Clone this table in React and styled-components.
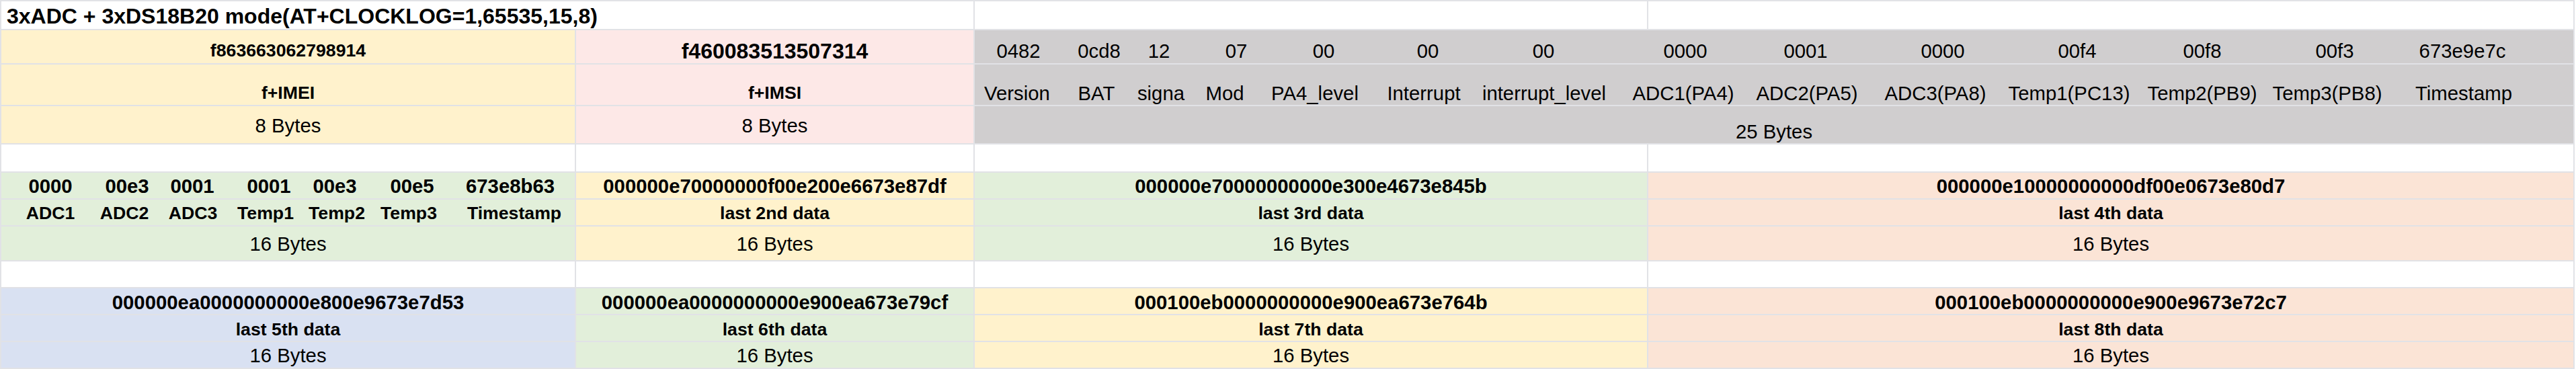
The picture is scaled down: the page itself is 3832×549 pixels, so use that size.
import React from "react";
import styled, { createGlobalStyle } from "styled-components";

const GlobalStyle = createGlobalStyle`
  body {
    margin: 0;
    background: #fff;
  }
`;

const FILL = {
  white: "#ffffff",
  yellow: "#fff2cc",
  pink: "#fde8e7",
  gray: "#d0cecf",
  green: "#e2efda",
  orange: "#fbe4d6",
  blue: "#d9e1f2",
};

// sheet grid, the background shows through the 2px gaps as gridlines
const Sheet = styled.div`
  display: grid;
  grid-template-columns: 853px 591px 1000px 1376px;
  grid-template-rows: 41px 49px 60px 55px 40px 38px 38px 50px 38px 38px 38px 38px;
  gap: 2px;
  padding: 2px;
  width: max-content;
  background: #e1e2e6;
  font-family: "Liberation Sans", Arial, sans-serif;
  color: #000;
`;

const Cell = styled.div`
  grid-column: span ${(p) => p.$span || 1};
  display: flex;
  align-items: flex-end;
  justify-content: ${(p) => (p.$left ? "flex-start" : "center")};
  min-width: 0;
  padding: 0 0 ${(p) => p.$pb ?? 4}px ${(p) => p.$pl || 0}px;
  background: ${(p) => FILL[p.$bg || "white"]};
  font-size: ${(p) => p.$size || 29.33}px;
  font-weight: ${(p) => (p.$bold ? 700 : 400)};
  line-height: 1;
  white-space: nowrap;
`;

const Fields = styled.div`
  display: grid;
  grid-template-columns: ${(p) => p.$cols.map((w) => w + "px").join(" ")};
  padding-left: ${(p) => p.$offset || 0}px;
`;

const Field = styled.span`
  display: flex;
  justify-content: center;
  min-width: 0;
`;

const FieldRow = ({ items, cols, offset }) => (
  <Fields $cols={cols} $offset={offset}>
    {items.map((t, i) => (
      <Field key={i}>{t}</Field>
    ))}
  </Fields>
);

const GRAY_VALUES = ["0482", "0cd8", "12", "07", "00", "00", "00", "0000", "0001", "0000", "00f4", "00f8", "00f3", "673e9e7c"];
const GRAY_VALUE_COLS = [130, 110, 68, 162, 98, 212, 132, 290, 68, 340, 60, 312, 82, 298];
const GRAY_LABELS = ["Version", "BAT", "signa", "Mod", "PA4_level", "Interrupt", "interrupt_level", "ADC1(PA4)", "ADC2(PA5)", "ADC3(PA8)", "Temp1(PC13)", "Temp2(PB9)", "Temp3(PB8)", "Timestamp"];
const GRAY_LABEL_COLS = [126, 110, 82, 108, 160, 164, 194, 220, 148, 234, 164, 232, 140, 266];

const LAST_VALUES = ["0000", "00e3", "0001", "0001", "00e3", "00e5", "673e8b63"];
const LAST_VALUE_COLS = [110, 118, 76, 152, 44, 186, 106];
const LAST_LABELS = ["ADC1", "ADC2", "ADC3", "Temp1", "Temp2", "Temp3", "Timestamp"];
const LAST_LABEL_COLS = [110, 110, 94, 122, 90, 124, 190];

const HISTORY_TOP = [
  { bg: "yellow", hex: "000000e70000000f00e200e6673e87df", name: "last 2nd data" },
  { bg: "green", hex: "000000e70000000000e300e4673e845b", name: "last 3rd data" },
  { bg: "orange", hex: "000000e10000000000df00e0673e80d7", name: "last 4th data" },
];

const HISTORY_BOTTOM = [
  { bg: "blue", hex: "000000ea0000000000e800e9673e7d53", name: "last 5th data" },
  { bg: "green", hex: "000000ea0000000000e900ea673e79cf", name: "last 6th data" },
  { bg: "yellow", hex: "000100eb0000000000e900ea673e764b", name: "last 7th data" },
  { bg: "orange", hex: "000100eb0000000000e900e9673e72c7", name: "last 8th data" },
];

const BlankRow = () => (
  <>
    <Cell />
    <Cell />
    <Cell />
    <Cell />
  </>
);

export default function App() {
  return (
    <>
      <GlobalStyle />
      <Sheet>
        {/* row 1 */}
        <Cell $span={2} $left $pl={8} $pb={3} $size={32} $bold>
          3xADC + 3xDS18B20 mode(AT+CLOCKLOG=1,65535,15,8)
        </Cell>
        <Cell />
        <Cell />

        {/* rows 2-4 : header block */}
        <Cell $bg="yellow" $size={26.67} $bold $pb={5}>f863663062798914</Cell>
        <Cell $bg="pink" $size={32} $bold $pb={2}>f460083513507314</Cell>
        <Cell $bg="gray" $span={2} $left $pb={4}>
          <FieldRow items={GRAY_VALUES} cols={GRAY_VALUE_COLS} />
        </Cell>

        <Cell $bg="yellow" $size={26.67} $bold $pb={4}>f+IMEI</Cell>
        <Cell $bg="pink" $size={26.67} $bold $pb={4}>f+IMSI</Cell>
        <Cell $bg="gray" $span={2} $left $pb={3}>
          <FieldRow items={GRAY_LABELS} cols={GRAY_LABEL_COLS} />
        </Cell>

        <Cell $bg="yellow" $pb={11.5}>8 Bytes</Cell>
        <Cell $bg="pink" $pb={11.5}>8 Bytes</Cell>
        <Cell $bg="gray" $span={2} $pb={2.5}>25 Bytes</Cell>

        <BlankRow />

        {/* rows 6-8 : last data + 2nd..4th */}
        <Cell $bg="green" $left $bold $pb={4}>
          <FieldRow items={LAST_VALUES} cols={LAST_VALUE_COLS} offset={18} />
        </Cell>
        {HISTORY_TOP.map((h) => (
          <Cell key={h.hex} $bg={h.bg} $bold $pb={4}>{h.hex}</Cell>
        ))}

        <Cell $bg="green" $left $bold $size={26.67} $pb={4}>
          <FieldRow items={LAST_LABELS} cols={LAST_LABEL_COLS} offset={18} />
        </Cell>
        {HISTORY_TOP.map((h) => (
          <Cell key={h.name} $bg={h.bg} $bold $size={26.67} $pb={4}>{h.name}</Cell>
        ))}

        <Cell $bg="green" $pb={9.5}>16 Bytes</Cell>
        {HISTORY_TOP.map((h) => (
          <Cell key={h.bg + "size"} $bg={h.bg} $pb={9.5}>16 Bytes</Cell>
        ))}

        <BlankRow />

        {/* rows 10-12 : 5th..8th */}
        {HISTORY_BOTTOM.map((h) => (
          <Cell key={h.hex} $bg={h.bg} $bold $pb={3}>{h.hex}</Cell>
        ))}
        {HISTORY_BOTTOM.map((h) => (
          <Cell key={h.name} $bg={h.bg} $bold $size={26.67} $pb={3}>{h.name}</Cell>
        ))}
        {HISTORY_BOTTOM.map((h) => (
          <Cell key={h.name + "size"} $bg={h.bg} $pb={4}>16 Bytes</Cell>
        ))}
      </Sheet>
    </>
  );
}
